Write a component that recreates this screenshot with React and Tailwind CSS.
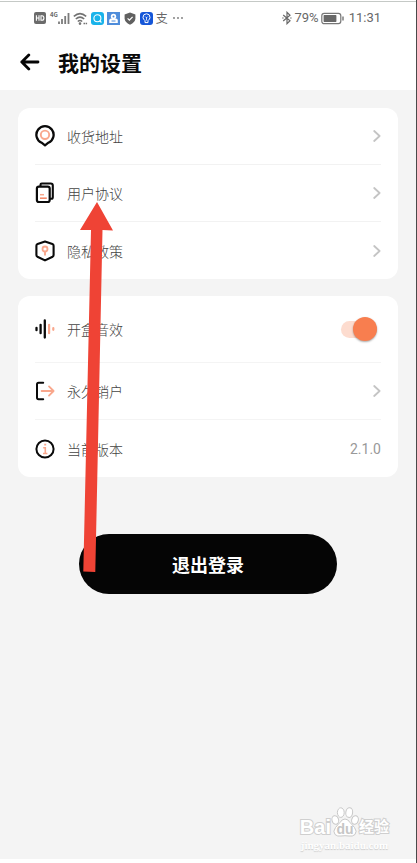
import React, { useState } from 'react';

const LINK_ROWS = [
  { id: 'address', label: '收货地址', Icon: PinIcon },
  { id: 'terms', label: '用户协议', Icon: PagesIcon },
  { id: 'privacy', label: '隐私政策', Icon: ShieldIcon }
];

function PinIcon() {
  return (
    <svg viewBox="0 0 20 22" className="w-5 h-[22px]" fill="none" aria-hidden="true">
      <path d="M10 20.3 6.6 17.7A8.6 8.6 0 1 1 13.4 17.7Z" stroke="#0a0a0a" strokeWidth="2.3" strokeLinejoin="round" />
      <circle cx="10" cy="9.8" r="4.2" stroke="#f9a78c" strokeWidth="1.9" />
    </svg>);
}

function PagesIcon() {
  return (
    <svg viewBox="0 0 20 22" className="w-5 h-[22px]" fill="none" aria-hidden="true">
      <path d="M5.5 4V2.8Q5.5 1.5 6.8 1.5H15.7Q17.8 1.5 17.8 3.6V15.2Q17.8 16.7 16.3 16.7H15" stroke="#0a0a0a" strokeWidth="2.1" />
      <rect x="1.9" y="4.6" width="12.8" height="15.4" rx="2" stroke="#0a0a0a" strokeWidth="2.2" />
      <path d="M5 12.7h4" stroke="#f9a78c" strokeWidth="1.5" />
      <path d="M5 16.2h6.8" stroke="#f58a6b" strokeWidth="1.6" />
    </svg>);
}

function ShieldIcon() {
  return (
    <svg viewBox="0 0 20 22" className="w-5 h-[22px]" fill="none" aria-hidden="true">
      <path d="M10 1.5 17.4 4.1Q18.6 4.5 18.6 5.7V14.9Q18.6 16 17.6 16.7L10 20.4 2.4 16.7Q1.4 16 1.4 14.9V5.7Q1.4 4.5 2.6 4.1Z" stroke="#0a0a0a" strokeWidth="2.1" strokeLinejoin="round" />
      <circle cx="10" cy="9" r="2.5" stroke="#f9a78c" strokeWidth="1.8" />
      <path d="M10 11.2V15.6" stroke="#f9a78c" strokeWidth="1.9" />
    </svg>);
}

function SoundIcon() {
  return (
    <svg viewBox="0 0 20 22" className="w-5 h-[22px]" fill="none" strokeLinecap="round" aria-hidden="true">
      <path d="M1.5 9.8V12.2M5.6 6.8V15.2M9.8 2.4V19.6" stroke="#0a0a0a" strokeWidth="2.3" />
      <path d="M14.1 6.8V15.2M18.3 10.2V11.8" stroke="#f9a78c" strokeWidth="2.2" />
    </svg>);
}

function LeaveIcon() {
  return (
    <svg viewBox="0 0 20 22" className="w-5 h-[22px]" fill="none" strokeLinecap="round" strokeLinejoin="round" aria-hidden="true">
      <path d="M8.2 2.8H3.6Q2 2.8 2 4.4V17.6Q2 19.2 3.6 19.2H8.2" stroke="#0a0a0a" strokeWidth="2" />
      <path d="M6.6 11H18.6M14 6.4 18.6 11 14 15.6" stroke="#f9a78c" strokeWidth="1.8" />
    </svg>);
}

function InfoIcon() {
  return (
    <svg viewBox="0 0 20 22" className="w-5 h-[22px]" fill="none" aria-hidden="true">
      <circle cx="10" cy="11" r="8.6" stroke="#0a0a0a" strokeWidth="2" />
      <path d="M9.2 6.6H11.2M8.2 9.7H10.3V15.2M8 15.5H12.4" stroke="#f9a78c" strokeWidth="1.6" />
    </svg>);
}

function Chevron() {
  return (
    <svg viewBox="0 0 8 12" className="w-2 h-3" fill="none" aria-hidden="true">
      <path d="M1.2 1 6.6 6 1.2 11" stroke="#c4c4c4" strokeWidth="1.8" strokeLinecap="round" strokeLinejoin="round" />
    </svg>);
}

function StatusBar() {
  return (
    <div className="flex items-center justify-between h-[33px] pl-[34px] pr-[35px] border-t border-[#c5c9c6] text-[#686868]">
      <div className="flex items-center gap-[3px]">
        <svg viewBox="0 0 12 12" className="w-3 h-3 mr-px" aria-hidden="true">
          <rect width="12" height="12" rx="2" fill="#6b6b6b" />
          <path d="M2.4 3.2V8.8M5 3.2V8.8M2.4 6H5M7 3.7V8.3H8Q9.9 8.3 9.9 6T8 3.7Z" stroke="#fff" strokeWidth="1.1" fill="none" />
        </svg>
        <div className="flex items-end">
          <span className="self-start text-[6px] leading-[6px] font-bold">4G</span>
          <svg viewBox="0 0 12 13" className="w-3 h-[13px]" stroke="#7c7c7c" strokeWidth="1.8" aria-hidden="true">
            <path d="M1 9.5V12M4 7V12M7.2 4V12M10.5 1V12" />
          </svg>
        </div>
        <svg viewBox="0 0 15 13" className="w-[15px] h-[13px]" fill="none" stroke="#727272" strokeWidth="1.5" aria-hidden="true">
          <path d="M.8 4.4Q7-1.2 13.2 4.4M2.8 7Q7 3.2 11.2 7M4.8 9.5Q7 7.6 9.2 9.5" />
          <circle cx="7" cy="11.6" r=".6" />
          <path d="M10.5 11.6h3.6" strokeDasharray="1.5 .6" />
        </svg>
        <svg viewBox="0 0 13 13" className="w-[13px] h-[13px]" fill="none" aria-hidden="true">
          <rect width="13" height="13" rx="3" fill="#19b3ea" />
          <circle cx="6.4" cy="6.3" r="3.5" stroke="#fff" strokeWidth="1.1" />
          <path d="M8.6 8.7 10.4 10.5" stroke="#fff" strokeWidth="1.1" />
        </svg>
        <svg viewBox="0 0 13 13" className="w-[13px] h-[13px]" aria-hidden="true">
          <rect width="13" height="13" fill="#4f8ddb" />
          <circle cx="6.5" cy="4.4" r="2.7" fill="#fff" />
          <path d="M2.2 11V8.4Q2.2 6.6 4.2 6.6H8.8Q10.8 6.6 10.8 8.4V11Z" fill="#fff" />
          <circle cx="6.5" cy="4.4" r="1" fill="#4f8ddb" />
          <path d="M4.5 9H8.5" stroke="#4f8ddb" />
        </svg>
        <svg viewBox="0 0 12 13" className="w-3 h-[13px] mx-px" aria-hidden="true">
          <path d="M6 .4 11.4 2.4V6.5Q11.1 10.6 6 12.8 .9 10.6 .6 6.5V2.4Z" fill="#606060" />
          <path d="M3.6 6.4 5.4 8.2 8.6 4.8" fill="none" stroke="#fff" strokeWidth="1.2" />
        </svg>
        <svg viewBox="0 0 13 13" className="w-[13px] h-[13px]" fill="none" aria-hidden="true">
          <rect width="13" height="13" rx="3" fill="#1556d8" />
          <path d="M5 8.6Q3 7.2 3 5.3A3.5 3.5 0 0 1 10 5.3Q10 7.2 8 8.6V10.6H5Z" stroke="#fff" />
          <path d="M6.5 8.5V5.4M5.3 4.6 6.5 5.8 7.7 4.6" stroke="#fff" strokeWidth=".8" />
        </svg>
        <span className="text-[12px] leading-4">支</span>
        <svg viewBox="0 0 12 4" className="w-3 h-1 ml-px" fill="#777" aria-hidden="true">
          <circle cx="2" cy="2" r=".9" />
          <circle cx="6" cy="2" r=".9" />
          <circle cx="10" cy="2" r=".9" />
        </svg>
      </div>
      <div className="flex items-center font-['Roboto',sans-serif] text-[13px] leading-4">
        <svg viewBox="0 0 10 14" className="w-[10px] h-[14px] mr-[2px]" fill="none" stroke="#686868" strokeWidth="1.2" aria-hidden="true">
          <path d="M1.2 4 8 9.8 5 12.7V1.3L8 4.2 1.2 10" />
          <path d="M.2 7H1.6M8.2 7H9.6" />
        </svg>
        <span>79%</span>
        <svg viewBox="0 0 24 13" className="w-6 h-[13px] ml-[2px] mr-1" aria-hidden="true">
          <rect x=".8" y="1.3" width="19" height="10.4" rx="2.4" fill="none" stroke="#777" strokeWidth="1.2" />
          <rect x="2.6" y="3.1" width="12.8" height="6.8" rx=".6" fill="#686868" />
          <path d="M22 4.4V8.6" stroke="#686868" strokeWidth="1.3" />
        </svg>
        <span>11:31</span>
      </div>
    </div>);
}

function Watermark() {
  return (
    <div className="self-end flex flex-col items-center mr-[9px] text-white font-['Liberation_Sans','Noto_Sans_CJK_SC',sans-serif]">
      <div className="flex items-end">
        <span className="text-[20px] leading-5 font-bold [-webkit-text-stroke:2px_#cfcfcf] [paint-order:stroke_fill]">Bai</span>
        <div className="relative">
          <svg viewBox="0 0 28 30" className="w-7 h-[30px]" fill="#fff" stroke="#c8c8c8" strokeWidth="1" aria-hidden="true">
            <ellipse cx="4.3" cy="13" rx="3.3" ry="4.3" transform="rotate(-15 4.3 13)" />
            <ellipse cx="9.8" cy="5.6" rx="3.4" ry="4.8" />
            <ellipse cx="18.2" cy="5.6" rx="3.4" ry="4.8" transform="rotate(8 18.2 5.6)" />
            <ellipse cx="24" cy="13" rx="3.3" ry="4.3" transform="rotate(15 24 13)" />
            <path d="M14 12Q17 12 19 15.5 21 17.5 23.5 20.5 26.5 24.5 24 27.5 21.5 29.8 18 29 14 28.4 10 29 6.5 29.8 4 27.5 1.5 24.5 4.5 20.5 7 17.5 9 15.5 11 12 14 12Z" />
          </svg>
          <span className="absolute inset-x-0 bottom-0 text-center text-[14px] leading-4 font-bold text-[#c6c6c6]">du</span>
        </div>
        <span className="text-[15px] leading-5 font-bold [-webkit-text-stroke:2px_#cfcfcf] [paint-order:stroke_fill]">经验</span>
      </div>
      <span className="font-['Liberation_Serif',serif] text-[11px] leading-4 font-bold [text-shadow:0_1px_1px_#cccccc]">jingyan.baidu.com</span>
    </div>);
}

function PointerArrow() {
  return (
    <svg viewBox="0 0 34 371" className="absolute left-[80px] top-[202px] w-[34px] h-[371px] pointer-events-none" aria-hidden="true">
      <path d="M17 0 33 28.5 22.5 28 15.3 370 3.3 369.5 11 28 0 28Z" fill="#ef4335" />
    </svg>);
}

export default function App() {
  const [sound, setSound] = useState(true);

  return (
    <div className="relative min-h-screen flex flex-col pt-px bg-white border-r border-[#4a4a4a] font-['Noto_Sans_CJK_SC',sans-serif]">
      <StatusBar />
      <header className="flex items-center h-14 pl-5 gap-[18px]">
        <button type="button" aria-label="返回">
          <svg viewBox="0 0 20 18" className="w-5 h-[18px]" fill="none" stroke="#050505" strokeWidth="2.8" strokeLinecap="round" strokeLinejoin="round" aria-hidden="true">
            <path d="M18 9H1.8M8.8 2 1.8 9 8.8 16" />
          </svg>
        </button>
        <h1 className="text-[21px] leading-7 font-bold text-[#0a0a0a]">我的设置</h1>
      </header>

      <main className="flex-1 flex flex-col bg-[#f4f4f4] px-[18px] pt-[18px] pb-1.5 mb-1 text-[14px] leading-5 text-[#444]">
        <nav className="rounded-xl bg-white px-[17px] divide-y divide-[#f2f2f2]">
          {LINK_ROWS.map(({ id, label, Icon }) =>
            <a key={id} href={`#${id}`} className="flex items-center h-[57px]">
              <Icon />
              <span className="ml-3 flex-1 font-light">{label}</span>
              <Chevron />
            </a>
          )}
        </nav>

        <section className="mt-[17px] rounded-xl bg-white px-[17px] divide-y divide-[#f4f4f4]">
          <label className="flex items-center h-[67px] cursor-pointer">
            <SoundIcon />
            <span className="ml-3 flex-1 font-light">开盒音效</span>
            <input
              type="checkbox"
              role="switch"
              className="peer sr-only"
              checked={sound}
              onChange={(e) => setSound(e.target.checked)} />
            <span className="flex items-center w-9 h-[17px] mr-1 rounded-full bg-gray-200 peer-checked:bg-[#fddccf] peer-checked:justify-end">
              <span className="size-6 shrink-0 rounded-full bg-[#f87e4f] shadow-[0_1px_2px_rgba(0,0,0,0.35)]" />
            </span>
          </label>
          <a href="#close-account" className="flex items-center h-[57px]">
            <LeaveIcon />
            <span className="ml-3 flex-1 font-light">永久销户</span>
            <Chevron />
          </a>
          <div className="flex items-center h-[57px]">
            <InfoIcon />
            <span className="ml-3 flex-1 font-light">当前版本</span>
            <span className="font-['Roboto',sans-serif] text-[#999]">2.1.0</span>
          </div>
        </section>

        <button
          type="button"
          className="self-center mt-[57px] w-[68%] h-[60px] rounded-full bg-[#050505] text-white text-[18px] leading-6 font-bold">
          退出登录
        </button>

        <div className="flex-1" />
        <Watermark />
      </main>

      <PointerArrow />
    </div>);
}
